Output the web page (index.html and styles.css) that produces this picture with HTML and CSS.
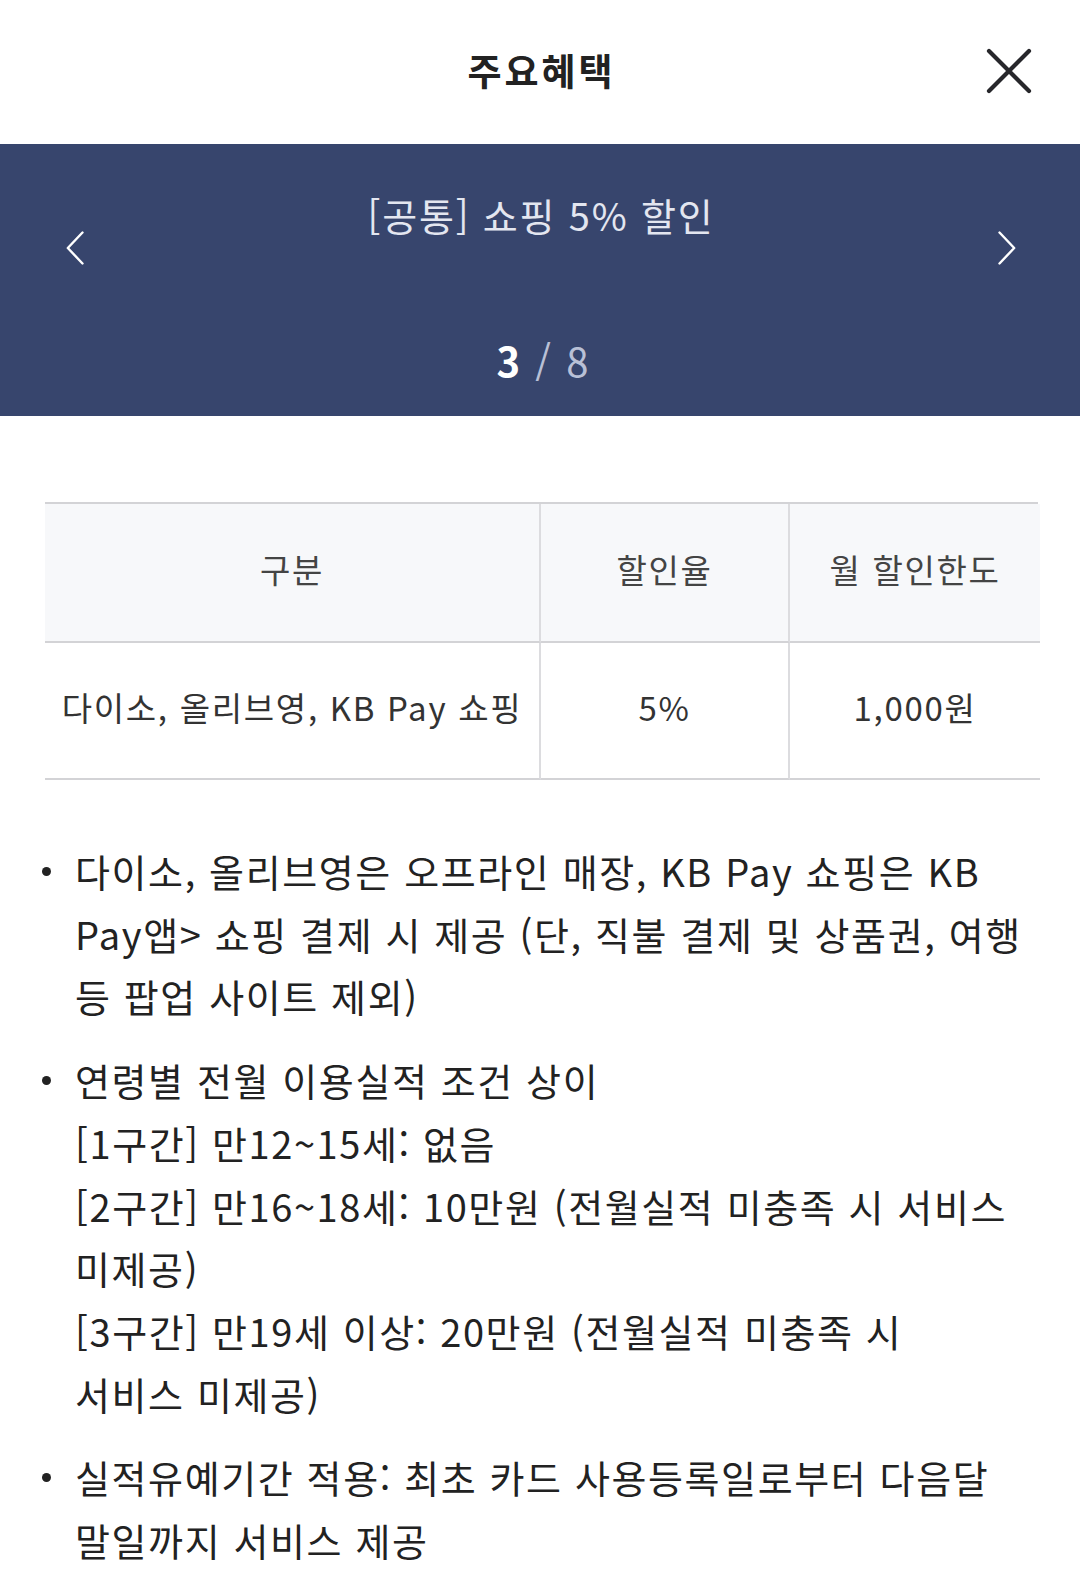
FILE: index.html
```html
<!DOCTYPE html>
<html lang="ko">
<head>
<meta charset="utf-8">
<title>주요혜택</title>
<link rel="stylesheet" href="styles.css">
</head>
<body>
<div class="page">
  <header class="top">
    <span class="top-spacer"></span>
    <h1 class="top-title">주요혜택</h1>
    <button class="close" aria-label="닫기">
      <svg width="46" height="46" viewBox="0 0 46 46"><path d="M3 3 L43 43 M43 3 L3 43" stroke="#27272b" stroke-width="4.2" stroke-linecap="round" fill="none"/></svg>
    </button>
  </header>

  <section class="banner">
    <div class="banner-row">
      <span class="chev">
        <svg width="18" height="34" viewBox="0 0 18 34"><path d="M16.5 1.5 L1.8 17 L16.5 32.5" stroke="#ffffff" stroke-width="2.4" stroke-linecap="round" stroke-linejoin="round" fill="none"/></svg>
      </span>
      <h2 class="banner-title">[공통] 쇼핑 5% 할인</h2>
      <span class="chev">
        <svg width="18" height="34" viewBox="0 0 18 34"><path d="M1.5 1.5 L16.2 17 L1.5 32.5" stroke="#ffffff" stroke-width="2.4" stroke-linecap="round" stroke-linejoin="round" fill="none"/></svg>
      </span>
    </div>
    <div class="counter"><b class="cur">3</b> <span class="total">/ 8</span></div>
  </section>

  <section class="content">
    <div class="table">
      <div class="cell head">구분</div>
      <div class="cell head">할인율</div>
      <div class="cell head">월 할인한도</div>
      <div class="cell body">다이소, 올리브영, KB Pay 쇼핑</div>
      <div class="cell body">5%</div>
      <div class="cell body">1,000원</div>
    </div>

    <ul class="notes">
      <li>다이소, 올리브영은 오프라인 매장, KB Pay 쇼핑은 KB Pay앱&gt; 쇼핑 결제 시 제공 (단, 직불 결제 및 상품권, 여행 등 팝업 사이트 제외)</li>
      <li>연령별 전월 이용실적 조건 상이<br>[1구간] 만12~15세: 없음<br>[2구간] 만16~18세: 10만원 (전월실적 미충족 시 서비스 미제공)<br>[3구간] 만19세 이상: 20만원 (전월실적 미충족 시<br>서비스 미제공)</li>
      <li>실적유예기간 적용: 최초 카드 사용등록일로부터 다음달 말일까지 서비스 제공</li>
    </ul>
  </section>
</div>
</body>
</html>
```

FILE: styles.css
```css
* { box-sizing: border-box; }
html, body { margin: 0; padding: 0; background: #ffffff; }
body {
  font-family: "Noto Sans CJK KR", "Noto Sans", sans-serif;
  color: #222222;
  width: 1080px;
  word-break: keep-all;
}
.page { width: 1080px; }

.top {
  height: 144px;
  display: grid;
  grid-template-columns: 1fr auto 1fr;
  align-items: center;
}
.top-title {
  margin: 0;
  font-size: 37px;
  font-weight: 700;
  line-height: 50px;
  color: #222222;
  letter-spacing: 3px;
  padding-left: 3px;
  padding-bottom: 4px;
}
.close {
  justify-self: end;
  margin-right: 48px;
  margin-bottom: 2px;
  border: 0;
  background: none;
  padding: 0;
  width: 46px;
  height: 46px;
  display: flex;
}

.banner {
  background: #37456d;
  height: 272px;
  padding-top: 46px;
  display: flex;
  flex-direction: column;
}
.banner-row {
  display: flex;
  justify-content: space-between;
  align-items: flex-start;
  padding: 0 64px 0 66px;
}
.chev {
  display: flex;
  margin-top: 41px;
}
.banner-title {
  margin: 0;
  font-size: 38px;
  line-height: 50px;
  font-weight: 400;
  color: #e3e6f0;
  letter-spacing: 1.8px;
}
.counter {
  margin-top: 70px;
  text-align: center;
  font-size: 40px;
  line-height: 50px;
  color: #b9c0d6;
  letter-spacing: 1px;
  word-spacing: 2px;
  padding-left: 6px;
}
.counter .cur { color: #ffffff; font-weight: 700; }

.content {
  padding: 86px 42px 0 45px;
}
.table {
  display: grid;
  grid-template-columns: 496px 249px 250px;
  border-top: 2px solid #d3d3d6;
}
.cell {
  display: flex;
  align-items: center;
  justify-content: center;
  font-size: 33px;
  letter-spacing: 1.7px;
  padding-bottom: 8px;
  border-bottom: 2px solid #d3d3d6;
  border-right: 2px solid #dcdcdf;
}
.cell:nth-child(3n) { border-right: 0; }
.head {
  height: 139px;
  background: #f7f8fa;
  color: #444444;
}
.body {
  height: 137px;
  color: #333333;
}

.notes {
  list-style: none;
  margin: 60px 0 0 0;
  padding: 0;
}
.notes li {
  display: flex;
  font-size: 38px;
  line-height: 62.7px;
  color: #222222;
  letter-spacing: 1.6px;
  margin-bottom: 21px;
  margin-left: -3px;
}
.notes li::before {
  content: "";
  flex: 0 0 9px;
  width: 9px;
  height: 9px;
  border-radius: 50%;
  background: #222222;
  margin-top: 27px;
  margin-right: 24px;
}
```
